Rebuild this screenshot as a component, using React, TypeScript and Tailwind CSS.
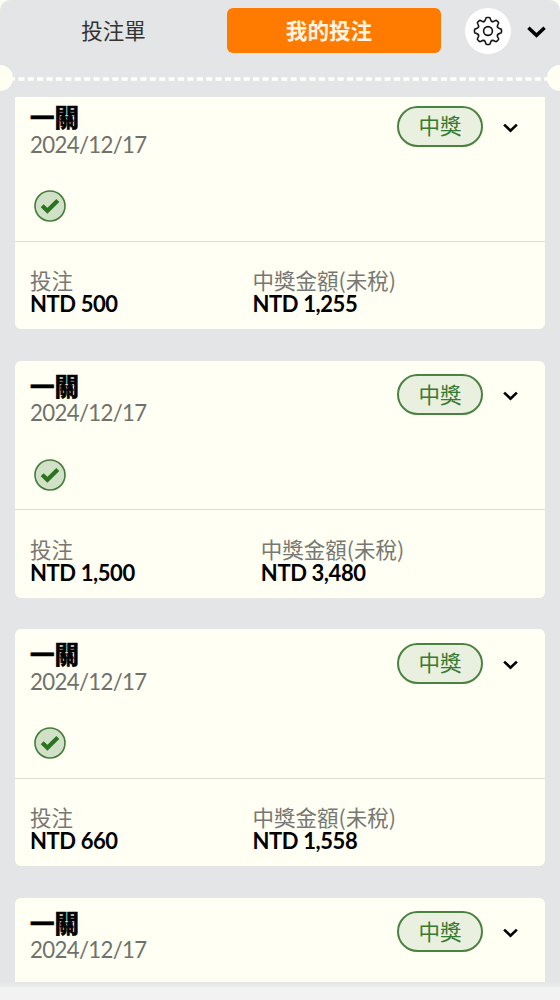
type Bet = { id: number; stake?: string; payout?: string };

const bets: Bet[] = [
  { id: 1, stake: "NTD 500", payout: "NTD 1,255" },
  { id: 2, stake: "NTD 1,500", payout: "NTD 3,480" },
  { id: 3, stake: "NTD 660", payout: "NTD 1,558" },
  { id: 4 },
];

function ChevronDown({ className }: { className: string }) {
  return (
    <svg viewBox="0 0 20 12" className={className} fill="none" stroke="currentColor" strokeWidth="3.6">
      <path d="M1.5 1.5 L10 9.5 L18.5 1.5" />
    </svg>
  );
}

function GearIcon() {
  const tooth =
    "M-3.94 -9.5 C-3 -9.9 -2.6 -10.6 -2.4 -11.8 Q-2.1 -13.5 -1.2 -13.5 H1.2 Q2.1 -13.5 2.4 -11.8 C2.6 -10.6 3 -9.9 3.94 -9.5";
  return (
    <svg viewBox="-15 -15 30 30" className="size-[30px]" fill="none" stroke="#141414" strokeWidth="1.6" strokeLinecap="round">
      {[0, 45, 90, 135, 180, 225, 270, 315].map((angle) => (
        <path key={angle} d={tooth} transform={`rotate(${angle})`} />
      ))}
      <circle r="4.4" />
    </svg>
  );
}

function CheckIcon() {
  return (
    <svg viewBox="0 0 32 32" className="size-8" fill="none">
      <circle cx="16" cy="16" r="15" fill="#d0e1c7" stroke="#427c38" strokeWidth="1.6" />
      <path d="M8.2 15.8 L13.4 20.8 L23.8 10.6" stroke="#2b731f" strokeWidth="4.2" />
    </svg>
  );
}

function Amount({ label, value }: { label: string; value: string }) {
  return (
    <div className="min-w-[96.5px]">
      <dt className="font-['Noto_Sans_CJK_TC',sans-serif] text-[21.5px] leading-[24px] text-[#777873]">{label}</dt>
      <dd className="text-[22px] font-bold leading-[24px] tracking-[-0.4px] text-black">{value}</dd>
    </div>
  );
}

function BetCard({ bet }: { bet: Bet }) {
  return (
    <article className="shrink-0 rounded-[6px] bg-[#fffff4]">
      <div className="flex h-[149.5px] flex-col justify-between border-b-[1.5px] border-[#deded7] px-[15px] pb-[18.5px] pt-[12px]">
        <div className="flex items-start justify-between">
          <div className="pt-[0.7px]">
            <h2 className="text-[24.5px] font-bold leading-[26.5px] text-black [-webkit-text-stroke:0.7px_black]">一關</h2>
            <p className="text-[22.2px] leading-[26px] tracking-[-0.65px] text-[#70716c]">2024/12/17</p>
          </div>
          <div className="flex items-center gap-[20px] pr-[12px] pt-[1.5px]">
            <span className="flex h-[41px] w-[86px] items-center justify-center rounded-full border-2 border-[#4a8340] bg-[#e9f0df] pt-px text-[21.5px] leading-none text-[#387a30]">
              中獎
            </span>
            <ChevronDown className="mt-[3px] h-[10px] w-[15px] text-black" />
          </div>
        </div>
        <div className="pl-1">
          <CheckIcon />
        </div>
      </div>
      {bet.stake && bet.payout && (
        <dl className="flex h-[87.5px] gap-[126px] px-[15px] pt-[26.5px]">
          <Amount label="投注" value={bet.stake} />
          <Amount label="中獎金額(未稅)" value={bet.payout} />
        </dl>
      )}
    </article>
  );
}

export default function App() {
  return (
    <div className="h-[1000px] w-[560px] overflow-hidden bg-[#fffff4] font-['Lato','Noto_Sans_CJK_TC',sans-serif]">
      <div className="flex h-full flex-col rounded-t-[10px] bg-[#e3e5e7]">
        <header className="flex h-[61px] shrink-0 items-center pr-[14px]">
          <button className="w-[227px] pt-px text-[21.5px] text-[#333]">投注單</button>
          <button className="h-[45px] w-[214px] rounded-[6px] bg-[#ff7b00] pr-[10px] pt-px text-[21.6px] font-bold text-[#fff5e0]">
            我的投注
          </button>
          <button className="ml-6 flex size-[46px] items-center justify-center rounded-full bg-white">
            <GearIcon />
          </button>
          <ChevronDown className="ml-[16px] mt-[2px] h-[12px] w-[19px] shrink-0 text-black" />
        </header>
        <div className="-mx-[13px] flex h-[36px] shrink-0 items-start justify-between pt-[4px]">
          <span className="size-[26px] shrink-0 rounded-full bg-[#fffff4]" />
          <svg className="mt-[12px] h-[4px] grow" preserveAspectRatio="none">
            <line x1="0" x2="100%" y1="2" y2="2" stroke="#fffff4" strokeWidth="3.5" strokeDasharray="6 3.39" strokeDashoffset="4" />
          </svg>
          <span className="size-[26px] shrink-0 rounded-full bg-[#fffff4]" />
        </div>
        <main className="h-[885px] shrink-0 overflow-hidden px-[15px]">
          <div className="-mt-[4.7px] flex flex-col gap-[31.5px]">
            {bets.map((bet) => (
              <BetCard key={bet.id} bet={bet} />
            ))}
          </div>
        </main>
        <div className="h-[5px] shrink-0 bg-gradient-to-b from-[#e5e6e5] to-[#eaeceb]" />
        <footer className="grow bg-[#f1f2f1]" />
      </div>
    </div>
  );
}
